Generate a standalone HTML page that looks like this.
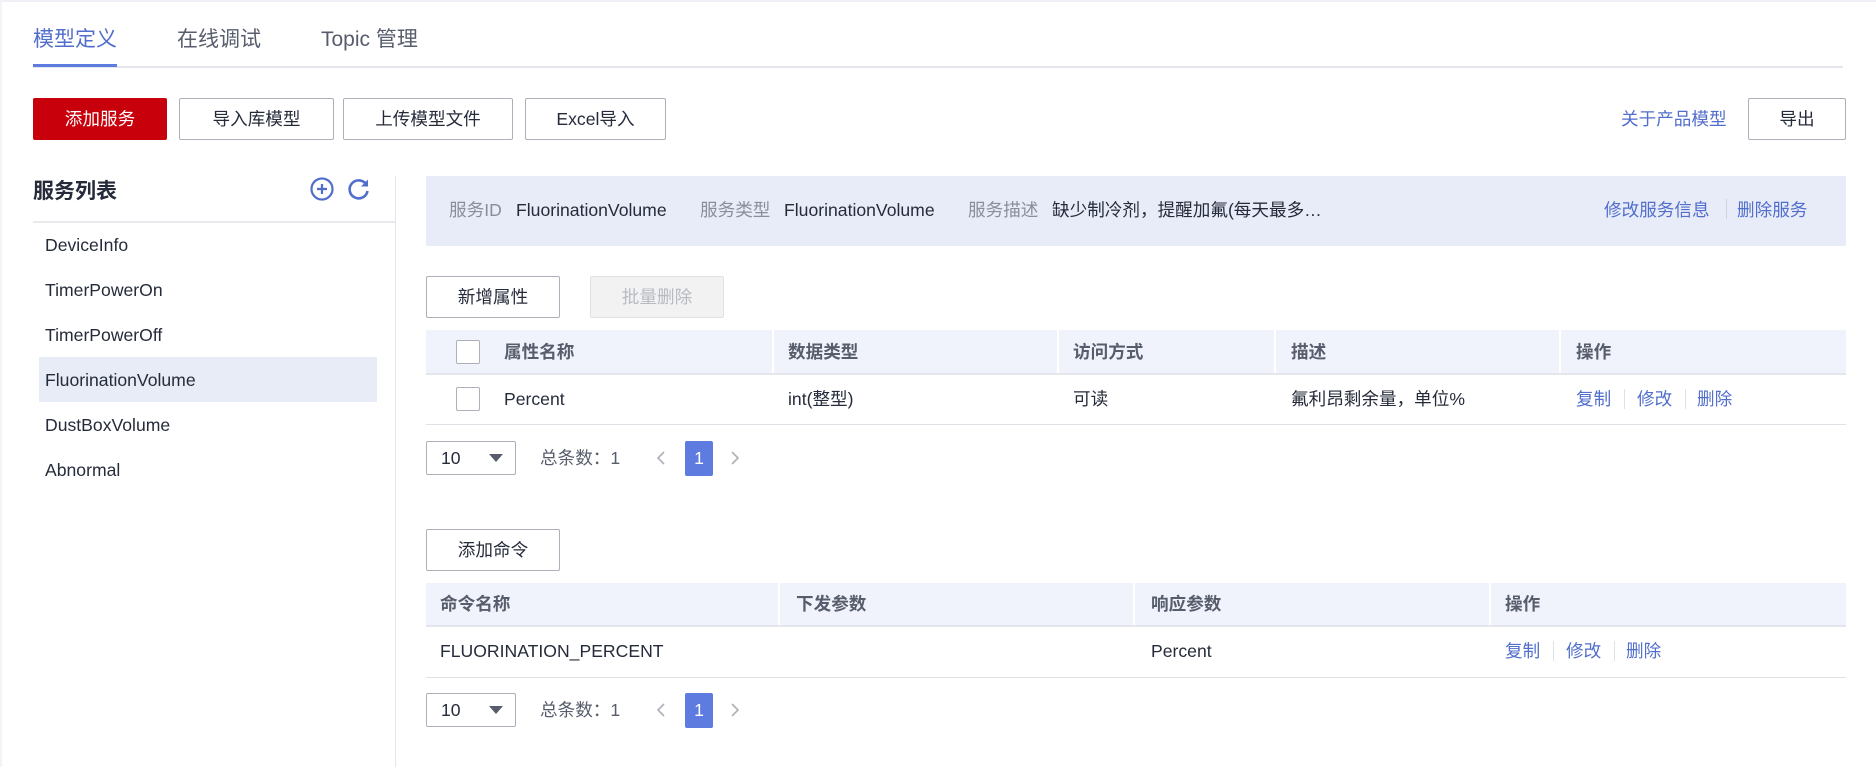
<!DOCTYPE html>
<html><head><meta charset="utf-8"><style>
*{box-sizing:border-box;margin:0;padding:0}
body{width:1876px;height:767px;background:#fff;position:relative;overflow:hidden;font-family:"Liberation Sans","Noto Sans CJK SC",sans-serif;color:#252b3a;font-size:17.6px;line-height:22px}
.a{position:absolute;white-space:nowrap;line-height:22px}
.btn{position:absolute;border:1px solid #adb0b8;border-radius:2px;background:#fff;display:flex;align-items:center;justify-content:center;font-size:17.6px;color:#252b3a;line-height:22px}
.lnk{color:#526ecc}
.th{position:absolute;font-weight:bold;color:#575d6c;font-size:17.6px;line-height:22px}
.cb{position:absolute;width:24px;height:24px;border:1px solid #adb0b8;border-radius:2px;background:#fff}
.vl{position:absolute;width:2px;background:#fff}
.hl{position:absolute;height:1px;background:#dfe1e6}
.sep{position:absolute;width:1px;height:20px;background:#dfe1e6}
</style></head><body>
<div class="a" style="left:0;top:0;width:1876px;height:2px;background:#eef0f5"></div>
<div class="a" style="left:0;top:0;width:2px;height:767px;background:#f3f4f7"></div>
<!-- tabs -->
<div class="a" style="left:33px;top:28px;font-size:21px;line-height:24px;color:#526ecc">模型定义</div>
<div class="a" style="left:177px;top:28px;font-size:21px;line-height:24px;color:#575d6c">在线调试</div>
<div class="a" style="left:321px;top:28px;font-size:21px;line-height:24px;color:#575d6c">Topic 管理</div>
<div class="hl" style="left:33px;top:66px;width:1810px;height:2px;background:#e4e6eb"></div>
<div class="a" style="left:33px;top:64px;width:84px;height:3px;background:#5e7ce0"></div>
<!-- buttons -->
<div class="btn" style="left:33px;top:98px;width:134px;height:42px;background:#c7000b;border-color:#c7000b;color:#fff">添加服务</div>
<div class="btn" style="left:179px;top:98px;width:155px;height:42px">导入库模型</div>
<div class="btn" style="left:343px;top:98px;width:170px;height:42px">上传模型文件</div>
<div class="btn" style="left:525px;top:98px;width:141px;height:42px">Excel导入</div>
<div class="a lnk" style="left:1621px;top:108px">关于产品模型</div>
<div class="btn" style="left:1748px;top:98px;width:98px;height:42px">导出</div>
<!-- left panel -->
<div class="a" style="left:33px;top:180px;font-size:21px;line-height:24px;font-weight:bold">服务列表</div>
<svg class="a" style="left:309px;top:176px" width="26" height="26" viewBox="0 0 26 26"><circle cx="13" cy="13" r="10.5" fill="none" stroke="#526ecc" stroke-width="2.2"/><path d="M13 8v10M8 13h10" stroke="#526ecc" stroke-width="2.2"/></svg>
<svg class="a" style="left:346px;top:176px" width="26" height="26" viewBox="0 0 26 26"><path d="M20.5 9A9 9 0 1 0 21.5 15" fill="none" stroke="#526ecc" stroke-width="2.6"/><path d="M22 3.5v7h-7z" fill="#526ecc"/></svg>
<div class="hl" style="left:33px;top:221px;width:362px;height:2px;background:#e9eaee"></div>
<div class="a" style="left:395px;top:176px;width:1px;height:591px;background:#e4e6eb"></div>
<div class="a" style="left:39px;top:357px;width:338px;height:45px;background:#e8ecf7"></div>
<div class="a" style="left:45px;top:234px">DeviceInfo</div>
<div class="a" style="left:45px;top:279px">TimerPowerOn</div>
<div class="a" style="left:45px;top:324px">TimerPowerOff</div>
<div class="a" style="left:45px;top:369px">FluorinationVolume</div>
<div class="a" style="left:45px;top:414px">DustBoxVolume</div>
<div class="a" style="left:45px;top:459px">Abnormal</div>
<!-- info bar -->
<div class="a" style="left:426px;top:176px;width:1420px;height:70px;background:#e8ecf8"></div>
<div class="a" style="left:449px;top:199px;color:#8a8e99">服务ID</div>
<div class="a" style="left:516px;top:199px">FluorinationVolume</div>
<div class="a" style="left:700px;top:199px;color:#8a8e99">服务类型</div>
<div class="a" style="left:784px;top:199px">FluorinationVolume</div>
<div class="a" style="left:968px;top:199px;color:#8a8e99">服务描述</div>
<div class="a" style="left:1052px;top:199px">缺少制冷剂，提醒加氟(每天最多…</div>
<div class="a lnk" style="left:1604px;top:199px">修改服务信息</div>
<div class="sep" style="left:1726px;top:199px;background:#d0d4dc"></div>
<div class="a lnk" style="left:1737px;top:199px">删除服务</div>
<!-- property table -->
<div class="btn" style="left:426px;top:276px;width:134px;height:42px">新增属性</div>
<div class="btn" style="left:590px;top:276px;width:134px;height:42px;background:#f2f2f3;border-color:#dfe1e6;color:#b8bac2">批量删除</div>
<div class="a" style="left:426px;top:330px;width:1420px;height:43px;background:#f0f3fb"></div>
<div class="vl" style="left:772px;top:330px;height:43px"></div>
<div class="vl" style="left:1057px;top:330px;height:43px"></div>
<div class="vl" style="left:1274px;top:330px;height:43px"></div>
<div class="vl" style="left:1559px;top:330px;height:43px"></div>
<div class="hl" style="left:426px;top:373px;width:1420px;height:2px;background:#e4e6eb"></div>
<div class="cb" style="left:456px;top:340px"></div>
<div class="th" style="left:504px;top:341px">属性名称</div>
<div class="th" style="left:788px;top:341px">数据类型</div>
<div class="th" style="left:1073px;top:341px">访问方式</div>
<div class="th" style="left:1291px;top:341px">描述</div>
<div class="th" style="left:1576px;top:341px">操作</div>
<div class="cb" style="left:456px;top:387px"></div>
<div class="a" style="left:504px;top:388px">Percent</div>
<div class="a" style="left:788px;top:388px">int(整型)</div>
<div class="a" style="left:1073px;top:388px">可读</div>
<div class="a" style="left:1291px;top:388px">氟利昂剩余量，单位%</div>
<div class="a lnk" style="left:1576px;top:388px">复制</div>
<div class="sep" style="left:1624px;top:389px"></div>
<div class="a lnk" style="left:1637px;top:388px">修改</div>
<div class="sep" style="left:1685px;top:389px"></div>
<div class="a lnk" style="left:1697px;top:388px">删除</div>
<div class="hl" style="left:426px;top:424px;width:1420px"></div>
<!-- pagination 1 -->
<div class="a" style="left:426px;top:441px;width:90px;height:34px;border:1px solid #adb0b8;border-radius:2px"></div>
<div class="a" style="left:441px;top:447px">10</div>
<svg class="a" style="left:489px;top:454px" width="14" height="8"><path d="M0 0h14L7 8z" fill="#575d6c"/></svg>
<div class="a" style="left:540px;top:447px;color:#575d6c">总条数：1</div>
<svg class="a" style="left:656px;top:450px" width="10" height="16"><path d="M8 2L2 8l6 6" fill="none" stroke="#adb0b8" stroke-width="1.6"/></svg>
<div class="a" style="left:685px;top:441px;width:28px;height:35px;background:#5e7ce0;border-radius:2px;color:#fff;text-align:center;line-height:35px">1</div>
<svg class="a" style="left:730px;top:450px" width="10" height="16"><path d="M2 2l6 6-6 6" fill="none" stroke="#adb0b8" stroke-width="1.6"/></svg>
<!-- command table -->
<div class="btn" style="left:426px;top:529px;width:134px;height:42px">添加命令</div>
<div class="a" style="left:426px;top:583px;width:1420px;height:42px;background:#f0f3fb"></div>
<div class="vl" style="left:778px;top:583px;height:42px"></div>
<div class="vl" style="left:1133px;top:583px;height:42px"></div>
<div class="vl" style="left:1489px;top:583px;height:42px"></div>
<div class="hl" style="left:426px;top:625px;width:1420px;height:2px;background:#e4e6eb"></div>
<div class="th" style="left:440px;top:593px">命令名称</div>
<div class="th" style="left:796px;top:593px">下发参数</div>
<div class="th" style="left:1151px;top:593px">响应参数</div>
<div class="th" style="left:1505px;top:593px">操作</div>
<div class="a" style="left:440px;top:640px">FLUORINATION_PERCENT</div>
<div class="a" style="left:1151px;top:640px">Percent</div>
<div class="a lnk" style="left:1505px;top:640px">复制</div>
<div class="sep" style="left:1553px;top:641px"></div>
<div class="a lnk" style="left:1566px;top:640px">修改</div>
<div class="sep" style="left:1614px;top:641px"></div>
<div class="a lnk" style="left:1626px;top:640px">删除</div>
<div class="hl" style="left:426px;top:677px;width:1420px"></div>
<!-- pagination 2 -->
<div class="a" style="left:426px;top:693px;width:90px;height:34px;border:1px solid #adb0b8;border-radius:2px"></div>
<div class="a" style="left:441px;top:699px">10</div>
<svg class="a" style="left:489px;top:706px" width="14" height="8"><path d="M0 0h14L7 8z" fill="#575d6c"/></svg>
<div class="a" style="left:540px;top:699px;color:#575d6c">总条数：1</div>
<svg class="a" style="left:656px;top:702px" width="10" height="16"><path d="M8 2L2 8l6 6" fill="none" stroke="#adb0b8" stroke-width="1.6"/></svg>
<div class="a" style="left:685px;top:693px;width:28px;height:35px;background:#5e7ce0;border-radius:2px;color:#fff;text-align:center;line-height:35px">1</div>
<svg class="a" style="left:730px;top:702px" width="10" height="16"><path d="M2 2l6 6-6 6" fill="none" stroke="#adb0b8" stroke-width="1.6"/></svg>
</body></html>
